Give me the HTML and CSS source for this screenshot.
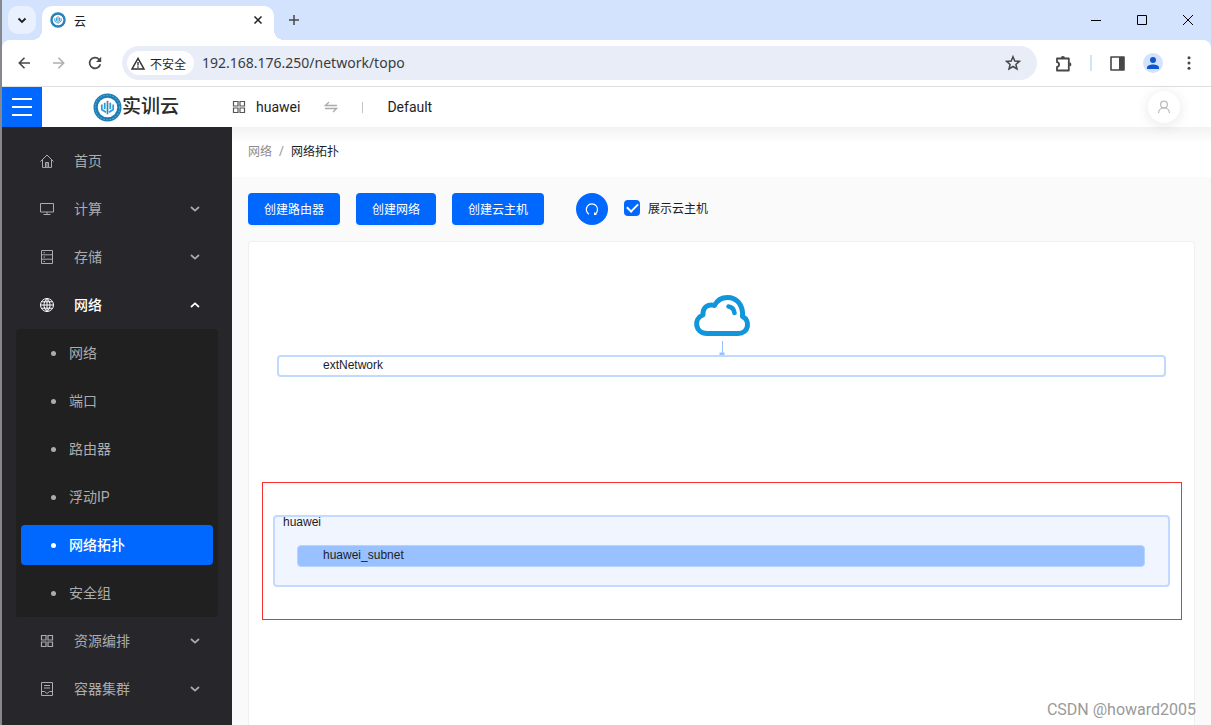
FILE: index.html
```html
<!DOCTYPE html>
<html lang="zh-CN">
<head>
<meta charset="utf-8">
<title>云</title>
<link rel="stylesheet" href="styles.css">
</head>
<body>
<svg class="defs" aria-hidden="true">
  <symbol id="emblem" viewBox="0 0 28 28">
    <circle cx="14" cy="14" r="13.5" fill="#1c7db4"/>
    <circle cx="14" cy="14" r="11.8" fill="none" stroke="#5aa6d0" stroke-width="1" stroke-dasharray="1.6 1.4"/>
    <circle cx="14" cy="14" r="9.4" fill="#fff"/>
    <path d="M8.500 11v5l4 2.500M19.500 11v5l-4 2.500M11.300 9.500v6M16.700 9.500v6" fill="none" stroke="#2a9bd8" stroke-width="1.700"/>
    <path d="M14 9.500v11" stroke="#1f86c4" stroke-width="1.600"/>
    <circle cx="14" cy="8.500" r="1.100" fill="#d9485a"/>
  </symbol>
  <symbol id="chevron" viewBox="0 0 10 10"><path d="M1 3l4 3.600L9 3" fill="none" stroke="currentColor" stroke-width="1.700"/></symbol>
  <symbol id="grid" viewBox="0 0 14 14"><path d="M1.500 1.500h4.500v4.500h-4.500zM8 1.500h4.500v4.500h-4.500zM1.500 8h4.500v4.500h-4.500zM8 8h4.500v4.500h-4.500z" fill="none" stroke="currentColor" stroke-width="1.200"/></symbol>
</svg>

<header class="browser">
  <div class="tabstrip">
    <button class="tab-search" aria-label="搜索标签页"><svg width="10" height="10" viewBox="0 0 10 10"><path d="M1.500 3.500L5 7l3.500-3.500" fill="none" stroke="#1f1f1f" stroke-width="1.800"/></svg></button>
    <div class="tab">
      <svg width="16" height="16"><use href="#emblem"/></svg>
      <span class="tab-title">云</span>
      <button class="plain" aria-label="关闭标签页"><svg width="10" height="10" viewBox="0 0 10 10"><path d="M1.500 1.500l7 7M8.500 1.500l-7 7" stroke="#1f1f1f" stroke-width="1.500"/></svg></button>
    </div>
    <button class="plain new-tab" aria-label="新标签页"><svg width="12" height="12" viewBox="0 0 12 12"><path d="M6 1v10M1 6h10" stroke="#474747" stroke-width="1.500"/></svg></button>
    <div class="window-controls">
      <button class="plain" aria-label="最小化"><svg width="10" height="10" viewBox="0 0 10 10"><path d="M0 5.500h10" stroke="#000"/></svg></button>
      <button class="plain" aria-label="最大化"><svg width="10" height="10" viewBox="0 0 10 10"><path d="M.5.500h9v9h-9z" fill="none" stroke="#000"/></svg></button>
      <button class="plain" aria-label="关闭"><svg width="10" height="10" viewBox="0 0 10 10"><path d="M0 0l10 10M10 0L0 10" stroke="#000"/></svg></button>
    </div>
  </div>
  <div class="address-row">
    <div class="nav-buttons">
      <button class="plain" aria-label="后退"><svg width="12" height="12" viewBox="0 0 12 12"><path d="M12 6H1.500M6.500.8L1.300 6l5.200 5.200" fill="none" stroke="#474747" stroke-width="1.600"/></svg></button>
      <button class="plain" aria-label="前进"><svg width="12" height="12" viewBox="0 0 12 12"><path d="M0 6h10.500M5.500.8L10.700 6l-5.200 5.200" fill="none" stroke="#b0b0b0" stroke-width="1.600"/></svg></button>
      <button class="plain" aria-label="刷新"><svg width="14" height="14" viewBox="0 0 14 14"><path d="M12.300 8.200A5.400 5.400 0 1 1 11 3.300L12.300 4.600" fill="none" stroke="#474747" stroke-width="1.700"/><path d="M13.200.8v5.200H8z" fill="#474747"/></svg></button>
    </div>
    <div class="omnibox">
      <button class="security"><svg width="14" height="13" viewBox="0 0 14 13"><path d="M7 1.400L13 12H1z" fill="none" stroke="#333" stroke-width="1.500"/><path d="M7 5v3.400M7 9.300v1.400" stroke="#333" stroke-width="1.400"/></svg><span>不安全</span></button>
      <input class="url" aria-label="地址" value="192.168.176.250/network/topo">
      <button class="plain" aria-label="收藏"><svg width="16" height="16" viewBox="0 0 16 16"><path d="M8 1.700l1.800 4.300 4.600.4-3.500 3 1.100 4.600L8 11.500 4 14l1.100-4.600-3.500-3L6.200 6z" fill="none" stroke="#474747" stroke-width="1.500"/></svg></button>
    </div>
    <div class="browser-actions">
      <button class="plain" aria-label="扩展程序"><svg width="17" height="17" viewBox="0 0 17 17"><path d="M2 3.500h11.800v12H2v-3.600c2.800-.3 2.800-4.400 0-4.700z" fill="none" stroke="#474747" stroke-width="1.800" stroke-linejoin="round"/><path d="M5.800 3a2.100 2.100 0 0 1 4.200 0zM14.300 7.300a2.100 2.100 0 0 1 0 4.200z" fill="#474747"/></svg></button>
      <span class="action-divider"></span>
      <button class="plain" aria-label="侧边栏"><svg width="15" height="15" viewBox="0 0 15 15"><path d="M1 1h13v13H1z" fill="none" stroke="#474747" stroke-width="1.600" stroke-linejoin="round"/><path d="M9 1h5v13H9z" fill="#474747"/></svg></button>
      <button class="plain profile" aria-label="个人资料"><svg width="20" height="20" viewBox="0 0 20 20"><circle cx="10" cy="10" r="10" fill="#d3e3fd"/><circle cx="10" cy="7" r="3" fill="#0b57d0"/><path d="M4 16v-1.400c0-2 3-3.200 6-3.200s6 1.200 6 3.200V16z" fill="#0b57d0"/></svg></button>
      <button class="plain" aria-label="更多"><svg width="4" height="14" viewBox="0 0 4 14"><circle cx="2" cy="1.700" r="1.500" fill="#474747"/><circle cx="2" cy="7" r="1.500" fill="#474747"/><circle cx="2" cy="12.300" r="1.500" fill="#474747"/></svg></button>
    </div>
  </div>
</header>

<header class="app-header">
  <button class="menu-toggle" aria-label="菜单"><svg width="20" height="18" viewBox="0 0 20 18"><path d="M0 1h20M0 9h20M0 17h20" stroke="#fff" stroke-width="2"/></svg></button>
  <a class="brand" href="#"><svg width="29" height="29"><use href="#emblem"/></svg><span>实训云</span></a>
  <div class="project">
    <svg class="project-icon" width="14" height="14"><use href="#grid"/></svg>
    <span>huawei</span>
    <svg class="swap" width="14" height="12" viewBox="0 0 14 12"><path d="M13 4.500H1.500L5 1M1 7.500h11.500L9 11" fill="none" stroke="#aaa" stroke-width="1.300"/></svg>
    <span class="header-divider"></span>
    <span>Default</span>
  </div>
  <button class="account" aria-label="账户"><svg width="14" height="14" viewBox="0 0 14 14"><circle cx="7" cy="4.500" r="3.400" fill="none" stroke="#bbb" stroke-width="1.200"/><path d="M1.500 13c.3-3.500 2.500-5 5.500-5s5.200 1.500 5.500 5" fill="none" stroke="#bbb" stroke-width="1.200"/></svg></button>
</header>

<div class="workspace">
  <nav class="sidebar">
    <a class="item" href="#"><svg width="14" height="14" viewBox="0 0 14 14"><path d="M.5 7.500L7 1l6.500 6.500M2.500 6v7.400h9V6M5.500 13V8.500h3V13M7 9v4" fill="none" stroke="currentColor"/></svg><span>首页</span></a>
    <a class="item" href="#"><svg width="14" height="14" viewBox="0 0 14 14"><path d="M.5 1.500h13v8.500H.5zM7 10v2.500M3.500 12.500h7" fill="none" stroke="currentColor"/></svg><span>计算</span><svg class="arrow" width="10" height="10"><use href="#chevron"/></svg></a>
    <a class="item" href="#"><svg width="14" height="14" viewBox="0 0 14 14"><path d="M1.500.5h11v13h-11zM1.500 4.800h11M1.500 9.200h11M3.500 2.700h1.500M3.500 7h1.500M3.500 11.400h1.500" fill="none" stroke="currentColor"/></svg><span>存储</span><svg class="arrow" width="10" height="10"><use href="#chevron"/></svg></a>
    <a class="item open" href="#"><svg width="14" height="14" viewBox="0 0 14 14"><path d="M7 .5a6.500 6.500 0 1 0 0 13a6.500 6.500 0 1 0 0-13M7 .5v13M.5 7h13M1.500 3.800h11M1.500 10.200h11M7 .5C3 4 3 10 7 13.500M7 .5c4 3.500 4 9.500 0 13" fill="none" stroke="currentColor"/></svg><span>网络</span><svg class="arrow" width="10" height="10"><use href="#chevron"/></svg></a>
    <ul class="submenu">
      <li><a href="#"><span>网络</span></a></li>
      <li><a href="#"><span>端口</span></a></li>
      <li><a href="#"><span>路由器</span></a></li>
      <li><a href="#"><span>浮动IP</span></a></li>
      <li><a class="current" href="#"><span>网络拓扑</span></a></li>
      <li><a href="#"><span>安全组</span></a></li>
    </ul>
    <a class="item" href="#"><svg width="14" height="14"><use href="#grid"/></svg><span>资源编排</span><svg class="arrow" width="10" height="10"><use href="#chevron"/></svg></a>
    <a class="item" href="#"><svg width="14" height="14" viewBox="0 0 14 14"><path d="M1.500.5h11v13h-11zM4 3.500h6M4 6h6M1.500 9.500h3L7 11.500l2.500-2h3" fill="none" stroke="currentColor"/></svg><span>容器集群</span><svg class="arrow" width="10" height="10"><use href="#chevron"/></svg></a>
  </nav>

  <main class="content">
    <nav class="breadcrumb"><a href="#">网络</a><span class="slash">/</span><span class="here">网络拓扑</span></nav>
    <div class="page">
      <div class="actions">
        <button class="primary">创建路由器</button>
        <button class="primary">创建网络</button>
        <button class="primary">创建云主机</button>
        <button class="refresh" aria-label="刷新拓扑"><svg width="14" height="14" viewBox="0 0 14 14"><path d="M4 12.200A5.600 5.600 0 1 1 10.200 12" fill="none" stroke="#fff" stroke-width="1.200"/><path d="M9 9.900v3h3z" fill="#fff"/></svg></button>
        <label class="check"><input type="checkbox" checked><span>展示云主机</span></label>
      </div>
      <section class="topology">
        <svg class="cloud" width="58" height="44" viewBox="0 0 58 44"><path d="M14 39.500h31c11 0 12.500-13 4.500-17C50.500 10 43 3.500 34.500 3.500c-6 0-10.500 3-13 8-6-2-12 1.500-11.500 9.500C0 24.500 2 39.500 14 39.500z" fill="none" stroke="#1296db" stroke-width="5" stroke-linejoin="round"/><path d="M35.500 12.500c3.500.5 5.500 2.800 6 6.500" fill="none" stroke="#1296db" stroke-width="4.600" stroke-linecap="round"/></svg>
        <svg class="link" width="6" height="14" viewBox="0 0 6 14"><path d="M3.500 0v12" stroke="#99c0ff"/><path d="M.5 11.500h5v2.500h-5z" fill="#99c0ff"/></svg>
        <div class="external">extNetwork</div>
        <div class="highlight">
          <div class="network">
            <div class="network-name">huawei</div>
            <div class="subnet">huawei_subnet</div>
          </div>
        </div>
      </section>
    </div>
  </main>
</div>
<div class="watermark">CSDN @howard2005</div>
</body>
</html>
```
FILE: styles.css
```css
* { box-sizing: border-box; }

body {
  margin: 0;
  min-height: 100vh;
  display: flex;
  flex-direction: column;
  position: relative;
  border-left: 2px solid #85888c;
  background: #fff;
  color: #1d1d1f;
  font-family: Roboto, "Noto Sans CJK SC", sans-serif;
  font-size: 14px;
}

button { font-family: inherit; border: 0; padding: 0; cursor: pointer; }
a { color: inherit; text-decoration: none; }
svg { display: block; flex: none; }
.defs { position: absolute; width: 0; height: 0; }
.plain { background: none; }

/* Browser frame */
.browser { background: #d3e3fd; border-bottom: 1px solid #dedfe1; }
.tabstrip { display: flex; align-items: center; height: 40px; padding-left: 6px; }
.tab-search {
  display: grid;
  place-items: center;
  width: 28px;
  height: 28px;
  border-radius: 10px;
  background: #e9f1fe;
}
.tab {
  align-self: flex-end;
  display: flex;
  align-items: center;
  gap: 8px;
  position: relative;
  width: 232px;
  height: 34px;
  margin-left: 6px;
  padding: 0 11px 6px 8px;
  border-radius: 10px 10px 0 0;
  background: #fff;
}
.tab::before, .tab::after {
  content: "";
  position: absolute;
  bottom: 0;
  width: 10px;
  height: 10px;
}
.tab::before { right: 100%; background: radial-gradient(circle at 0 0, transparent 10px, #fff 10px); }
.tab::after { left: 100%; background: radial-gradient(circle at 100% 0, transparent 10px, #fff 10px); }
.tab-title { flex: 1; font-size: 12px; }
.new-tab { margin-left: 14px; }
.window-controls { display: flex; gap: 36px; margin-left: auto; padding-right: 18px; }

.address-row {
  display: flex;
  align-items: center;
  height: 46px;
  border-radius: 8px 8px 0 0;
  background: #fff;
}
.nav-buttons { display: flex; align-items: center; gap: 23px; padding: 0 20px 0 16px; }
.omnibox {
  flex: 1;
  display: flex;
  align-items: center;
  height: 34px;
  padding: 0 16px 0 5px;
  border-radius: 17px;
  background: #e9edf8;
}
.security {
  display: flex;
  align-items: center;
  gap: 5px;
  height: 24px;
  padding: 0 8px 0 4px;
  border-radius: 12px;
  background: #fff;
  color: #1f1f1f;
  font-size: 12px;
}
.url {
  flex: 1;
  min-width: 0;
  padding: 0 8px 2px;
  border: 0;
  background: none;
  outline: 0;
  color: #3a3b3e;
  font: 14px "Noto Sans", sans-serif;
}
.browser-actions { display: flex; align-items: center; gap: 18px; padding: 0 20px 0 18px; }
.action-divider { width: 2px; height: 16px; background: #d3e3fd; }
.profile { margin-right: 6px; }

/* Application header */
.app-header {
  display: flex;
  align-items: center;
  position: relative;
  z-index: 1;
  height: 40px;
  padding-right: 31px;
  background: #fff;
}
.menu-toggle { display: grid; place-items: center; width: 40px; height: 40px; background: #0068ff; }
.brand {
  display: flex;
  align-items: center;
  width: 190px;
  padding-left: 51px;
  color: #2b2b2b;
  font-size: 19px;
  line-height: 24px;
  font-weight: 500;
}
.project { display: flex; align-items: center; gap: 10px; color: #1d1d1f; }
.project-icon { color: #555; }
.swap { margin-left: 14px; }
.header-divider { width: 1px; height: 11px; margin: 0 14px; background: #c4c4c4; }
.account {
  display: grid;
  place-items: center;
  width: 32px;
  height: 32px;
  margin-left: auto;
  border-radius: 50%;
  background: #fff;
  box-shadow: 0 2px 14px #0000001a;
}

/* Sidebar */
.workspace { flex: 1; display: flex; }
.sidebar { width: 230px; padding-top: 10px; background: #26262b; color: #acacad; position: relative; z-index: 2; }
.item { display: flex; align-items: center; gap: 20px; height: 48px; padding: 0 32px 0 38px; }
.item span, .submenu span { padding-bottom: 2px; }
.arrow { margin-left: auto; }
.open { color: #fff; font-weight: 500; }
.open .arrow { transform: rotate(180deg); }
.submenu { margin: 0 14px; padding: 4px 5px; border-radius: 4px; background: #202020; list-style: none; }
.submenu li + li { margin-top: 8px; }
.submenu a { display: flex; align-items: center; gap: 13px; height: 40px; padding-left: 30px; border-radius: 4px; }
.submenu a::before { content: ""; width: 5px; height: 5px; border-radius: 50%; background: currentColor; }
.submenu .current { background: #0068ff; color: #fff; font-weight: 500; }

/* Content */
.content { flex: 1; display: flex; flex-direction: column; min-width: 0; background: #fafafa; font-size: 12px; }
.breadcrumb {
  display: flex;
  align-items: center;
  gap: 7px;
  height: 50px;
  padding: 0 16px 3px;
  background: linear-gradient(#f2f2f2, #fff 16px);
  color: #8c8c8c;
}
.here { color: #1d1d1f; }
.page { flex: 1; display: flex; flex-direction: column; gap: 16px; padding: 16px 16px 0; }
.actions { display: flex; align-items: center; gap: 16px; }
.primary { height: 32px; padding: 0 16px 2px; border-radius: 4px; background: #0068ff; color: #fff; font-size: 12px; box-shadow: 0 2px 2px #0000000a; }
.refresh { display: grid; place-items: center; width: 32px; height: 32px; margin-left: 16px; border-radius: 50%; background: #0068ff; }
.check { display: flex; align-items: center; gap: 8px; padding-bottom: 3px; }
.check input {
  appearance: none;
  width: 16px;
  height: 16px;
  margin: 0;
  border-radius: 4px;
  background: #0068ff;
  display: grid;
  place-items: center;
}
.check input:checked::before {
  content: "";
  width: 9px;
  height: 5px;
  margin-bottom: 3px;
  border: solid #fff;
  border-width: 0 0 2px 2px;
  transform: rotate(-45deg);
}

/* Topology */
.topology {
  flex: 1;
  display: flex;
  flex-direction: column;
  padding: 52px 12px 0 13px;
  border: 1px solid #f0f0f0;
  border-bottom: 0;
  border-radius: 4px 4px 0 0;
  background: #fff;
  font-family: "Liberation Sans", Arial, sans-serif;
  color: #1d1d1f;
}
.cloud, .link { align-self: center; }
.link { margin-top: 3px; }
.external {
  height: 22px;
  margin: 0 16px 0 15px;
  padding-left: 44px;
  border: 2px solid #c0d9ff;
  border-radius: 4px;
  line-height: 16px;
}
.highlight { margin-top: 105px; padding: 32px 11px 32px 10px; border: 1px solid #f5302f; }
.network { padding: 0 23px 18px 22px; border: 2px solid #c2daff; border-radius: 4px; background: #f0f5ff; }
.network-name { margin-left: -14px; line-height: 10px; }
.subnet {
  height: 22px;
  margin-top: 18px;
  padding-left: 25px;
  border: 1px solid #b6d2ff;
  border-radius: 4px;
  background: #99c1ff;
  line-height: 18px;
}

.watermark {
  position: absolute;
  right: 15px;
  bottom: 5px;
  color: #9a9a9a;
  font-size: 16px;
  line-height: 20px;
}
```
